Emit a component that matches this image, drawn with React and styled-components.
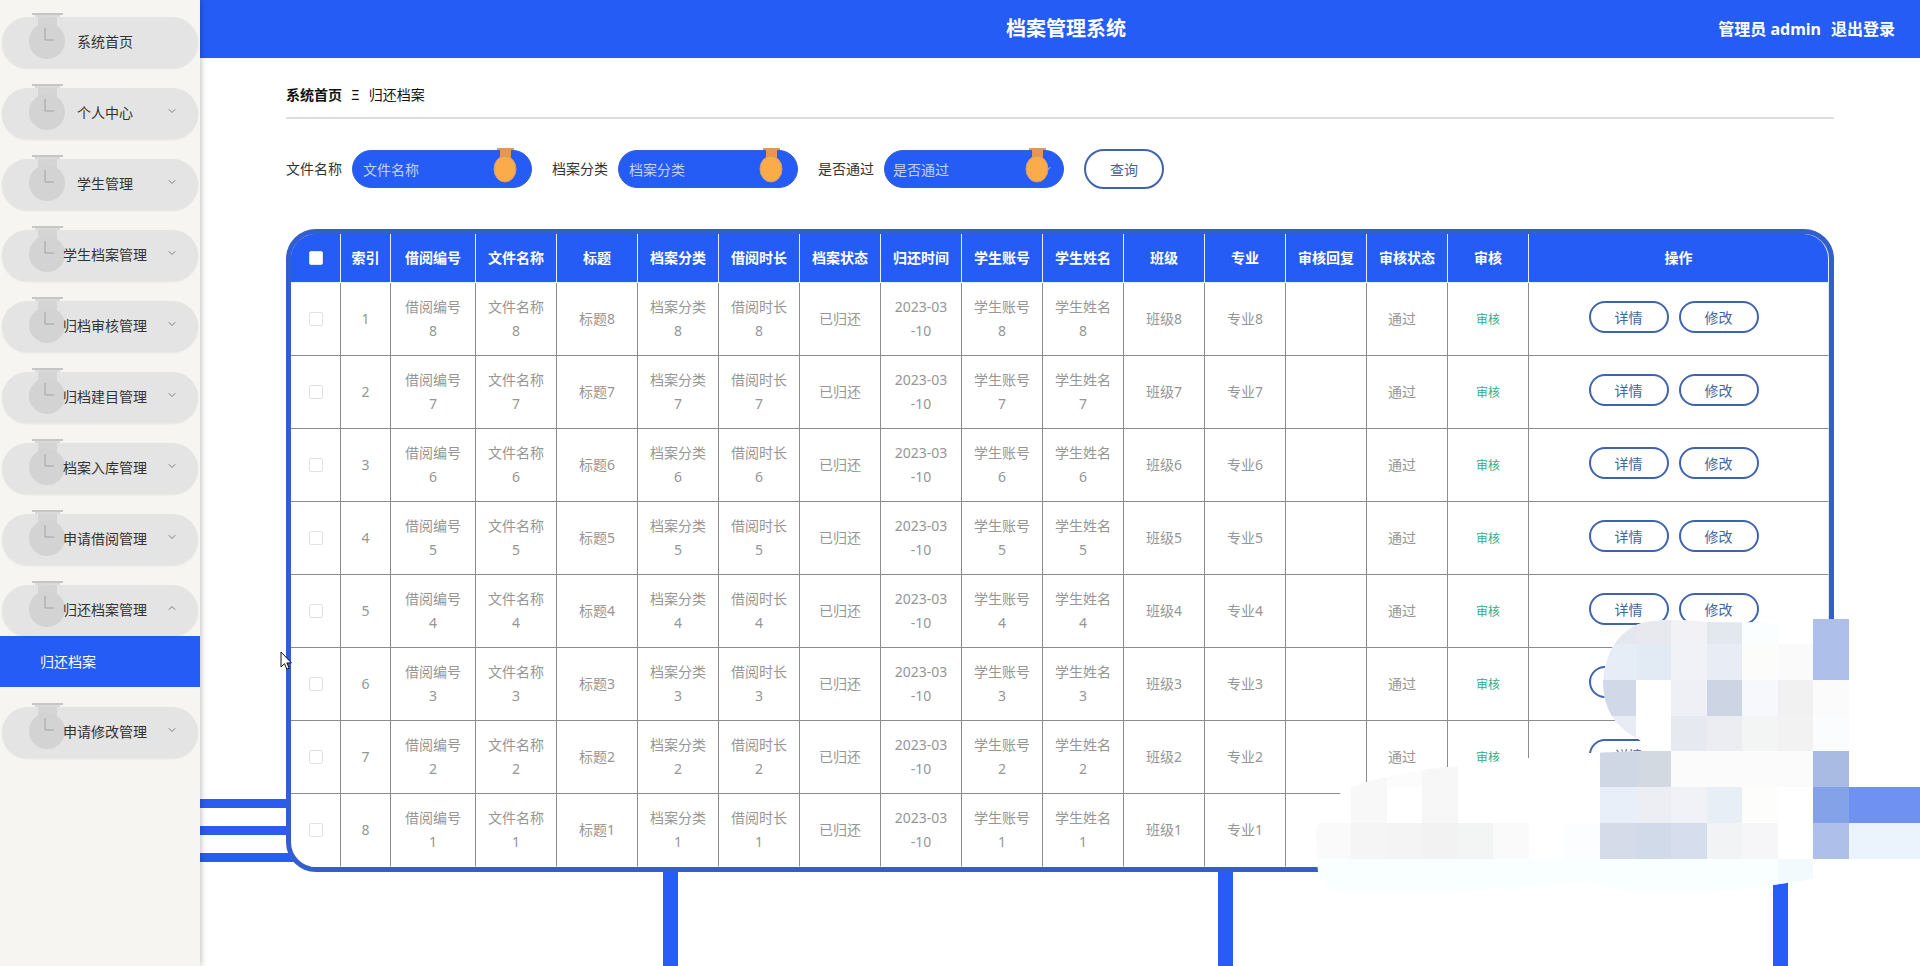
import React from "react";
import styled, { createGlobalStyle } from "styled-components";
import { ChevronDown, ChevronUp } from "lucide-react";

const GlobalStyle = createGlobalStyle`
  * {
    box-sizing: border-box;
  }
  body {
    margin: 0;
    background: #fff;
    font-family: "Noto Sans", "Noto Sans CJK SC", sans-serif;
    font-size: 14px;
    line-height: 24px;
  }
  button, input, select {
    font-family: inherit;
    font-size: 14px;
  }
`;

const Page = styled.div`
  position: relative;
  display: flex;
  min-height: 100vh;
`;
const Sidebar = styled.nav`
  position: relative;
  flex: 0 0 200px;
  padding-top: 17px;
  background: #f6f5f1;
  box-shadow: 1px 0 6px rgba(0, 0, 0, 0.25);
`;
const MenuItem = styled.button`
  position: relative;
  display: flex;
  align-items: center;
  justify-content: center;
  width: calc(100% - 4px);
  height: 51px;
  margin: 0 2px ${(p) => (p.$open ? 0 : 20)}px;
  padding: 0 0 4px 10px;
  border: 0;
  border-radius: 26px;
  background: #e4e4e4;
  box-shadow: 0 1px 2px rgba(0, 0, 0, 0.08);
  color: #333;
`;
const MenuText = styled.span`
  position: relative;
`;
const MenuMedal = styled.svg`
  position: absolute;
  left: 26px;
  top: -5px;
`;
const MenuArrow = styled.span`
  position: absolute;
  right: 20px;
  top: 17px;
  display: flex;
  color: #7c7f85;
`;
const SubMenu = styled.a`
  display: flex;
  align-items: center;
  height: 51px;
  margin-bottom: 20px;
  padding-left: 40px;
  background: #255cf6;
  color: #fff;
  text-decoration: none;
`;

const Main = styled.div`
  flex: 1;
  min-width: 0;
  background:
    repeating-linear-gradient(to bottom, #2a5cf0 0 9px, transparent 9px 27px) 0 calc(100% - 104px) / 110px 63px no-repeat,
    repeating-linear-gradient(to right, transparent 0 463px, #275cf6 463px 478px, transparent 478px 555px) 0 100% / 100% 110px no-repeat;
`;
const Header = styled.header`
  display: grid;
  grid-template-columns: 1fr auto 1fr;
  align-items: center;
  height: 58px;
  padding: 0 25px 0 37px;
  background: #255cf6;
  color: #fff;
`;
const Title = styled.h1`
  grid-column: 2;
  margin: 0;
  font-size: 20px;
  line-height: 28px;
`;
const User = styled.div`
  display: flex;
  justify-content: flex-end;
  gap: 10px;
  font-size: 16px;
  font-weight: bold;
`;
const Logout = styled.a`
  color: #fff;
  text-decoration: none;
`;

const Content = styled.main`
  padding: 0 5%;
`;
const Breadcrumb = styled.div`
  display: flex;
  align-items: center;
  gap: 9px;
  height: 61px;
  padding-top: 15px;
  border-bottom: 2px solid #ddd;
  color: #111;
`;
const SearchForm = styled.form`
  display: flex;
  align-items: center;
  gap: 20px;
  margin: 30px 0 40px;
`;
const Field = styled.div`
  display: flex;
  align-items: center;
  gap: 10px;
  color: #333;
`;
const FieldBox = styled.div`
  position: relative;
  display: flex;
`;
const FieldMedal = styled.svg`
  position: absolute;
  right: 15px;
  top: -2px;
  pointer-events: none;
`;
const FieldInput = styled.input`
  width: 180px;
  height: 38px;
  padding: 0 10px;
  border: 1px solid #3560d0;
  border-radius: 20px;
  background: #255cf6;
  color: #c3d2ef;
  outline: none;
  &::placeholder {
    color: #c3d2ef;
    opacity: 1;
  }
`;
const FieldSelect = styled.select`
  width: 180px;
  height: 38px;
  padding: 0 8px;
  border: 1px solid #3560d0;
  border-radius: 20px;
  background: #255cf6;
  color: #c3d2ef;
  appearance: none;
  outline: none;
`;
const SelectArrow = styled.span`
  position: absolute;
  right: 11px;
  top: 13px;
  display: flex;
  color: #c3d2ef;
  pointer-events: none;
`;
const PillButton = styled.button`
  width: 80px;
  height: ${(p) => (p.$small ? 32 : 40)}px;
  padding: 0;
  border: 2px solid #3f64ad;
  border-radius: 20px;
  background: #fff;
  color: #45659f;
`;

const TableBox = styled.div`
  overflow: hidden;
  border: 5px solid #325fcd;
  border-radius: 30px;
  background: #fff;
`;
const Table = styled.table`
  width: 100%;
  table-layout: fixed;
  border-collapse: separate;
  border-spacing: 0;
  text-align: center;
`;
const Th = styled.th`
  height: 49px;
  padding: 0;
  border-right: 1px solid #e6f1ff;
  border-bottom: 1px solid #e6f1ff;
  background: #255cf6;
  color: #fff;
  &:last-child {
    border-top-right-radius: 25px;
  }
`;
const HeadRow = styled.tr`
  background: #255cf6;
`;
const Td = styled.td`
  height: 73px;
  padding: 0 12px;
  border-right: 1px solid #8c8c90;
  border-bottom: 1px solid #8c8c90;
  color: #969696;
  word-break: break-all;
  &:last-child {
    border-right: 1px solid #dfe6f5;
  }
  tr:last-child > & {
    border-bottom-color: #fff;
  }
`;
const Check = styled.input`
  display: block;
  width: 14px;
  height: 14px;
  margin: 0 auto;
  appearance: none;
  border: 1px solid #e0e2e6;
  border-radius: 2px;
  background: #fff;
`;
const Status = styled.span`
  display: inline-block;
  margin-right: 10px;
`;
const AuditLink = styled.a`
  color: #2fae88;
  font-size: 12px;
  text-decoration: none;
`;
const Actions = styled.div`
  display: flex;
  justify-content: center;
  gap: 10px;
  padding: 0 10px 4px 0;
`;
const Overlay = styled.svg`
  position: absolute;
  right: 0;
  top: 619px;
  pointer-events: none;
`;
const Cursor = styled.svg`
  position: absolute;
  left: 280px;
  top: 651px;
  pointer-events: none;
`;

const menus = [
  "系统首页",
  "个人中心",
  "学生管理",
  "学生档案管理",
  "归档审核管理",
  "归档建目管理",
  "档案入库管理",
  "申请借阅管理",
  "归还档案管理",
  "申请修改管理",
];

const columns = [
  ["索引", 50],
  ["借阅编号", 85],
  ["文件名称", 81],
  ["标题", 81],
  ["档案分类", 81],
  ["借阅时长", 81],
  ["档案状态", 81],
  ["归还时间", 81],
  ["学生账号", 81],
  ["学生姓名", 81],
  ["班级", 81],
  ["专业", 81],
  ["审核回复", 81],
  ["审核状态", 81],
  ["审核", 81],
  ["操作", null],
];

const rows = [8, 7, 6, 5, 4, 3, 2, 1].map((n, i) => [
  i + 1,
  `借阅编号${n}`,
  `文件名称${n}`,
  `标题${n}`,
  `档案分类${n}`,
  `借阅时长${n}`,
  "已归还",
  "2023-03-10",
  `学生账号${n}`,
  `学生姓名${n}`,
  `班级${n}`,
  `专业${n}`,
  "",
]);

// x, y, width, height, color
const tiles = [
  [1600, 619, 36, 25, "#e2e7f0"],
  [1636, 619, 35, 25, "#e7e9ee"],
  [1671, 619, 36, 25, "#f2f2f6"],
  [1707, 619, 35, 25, "#e3e7ee"],
  [1742, 619, 36, 25, "#fbfeff"],
  [1600, 644, 36, 36, "#e6edf6"],
  [1636, 644, 35, 36, "#e2eaf3"],
  [1671, 644, 36, 36, "#f1f2f7"],
  [1707, 644, 35, 36, "#e8ecf4"],
  [1742, 644, 36, 36, "#fcfcfb"],
  [1778, 644, 35, 36, "#fafafa"],
  [1813, 619, 36, 61, "#aebfe9"],
  [1600, 680, 36, 36, "#d1d9e9"],
  [1671, 680, 36, 36, "#eff0f5"],
  [1707, 680, 35, 36, "#cdd4e3"],
  [1742, 680, 36, 36, "#f7f8fb"],
  [1778, 680, 35, 36, "#f1f1f1"],
  [1813, 680, 36, 36, "#fbfbfb"],
  [1600, 716, 36, 35, "#e9ecf5"],
  [1671, 716, 36, 35, "#e6e9ef"],
  [1707, 716, 35, 35, "#ebedf2"],
  [1742, 716, 36, 35, "#f3f4f4"],
  [1778, 716, 35, 35, "#f2f2f2"],
  [1813, 716, 36, 35, "#fafcfd"],
  [1600, 751, 36, 36, "#cfd6e4"],
  [1636, 751, 35, 36, "#d3d9e1"],
  [1671, 751, 142, 36, "#fbfbfc"],
  [1813, 751, 36, 36, "#a9bae3"],
  [1600, 787, 36, 36, "#e9eff8"],
  [1636, 787, 35, 36, "#eceef3"],
  [1671, 787, 36, 36, "#f1f2f7"],
  [1707, 787, 35, 36, "#e8eef5"],
  [1742, 787, 36, 36, "#fdfdfb"],
  [1813, 787, 36, 36, "#84a2e7"],
  [1849, 787, 71, 36, "#6f91f2"],
  [1600, 823, 36, 36, "#d6dbea"],
  [1636, 823, 35, 36, "#d0dae9"],
  [1671, 823, 36, 36, "#d6ddec"],
  [1707, 823, 35, 36, "#f2f3f5"],
  [1742, 823, 36, 36, "#f6f6f9"],
  [1813, 823, 36, 36, "#aebfe9"],
  [1849, 823, 71, 36, "#ebf4fd"],
  [1351, 751, 36, 72, "#f8f8f8"],
  [1387, 751, 35, 36, "#fcfcfc"],
  [1422, 751, 36, 72, "#f7f7f7"],
  [1316, 823, 35, 36, "#fafafa"],
  [1351, 823, 36, 36, "#f5f5f5"],
  [1387, 823, 35, 36, "#f4f4f4"],
  [1422, 823, 36, 36, "#f2f2f2"],
  [1458, 823, 35, 36, "#f3f5f5"],
  [1493, 823, 36, 36, "#fafafa"],
  [1564, 823, 36, 36, "#fbfdfe"],
  [1316, 859, 462, 36, "#f9feff"],
  [1778, 859, 35, 36, "#f3fafe"],
];

const blobPath =
  "M1318 872 L1316 830 Q1325 802 1341 793 Q1352 786 1367 782 Q1410 770 1458 766 L1529 758 L1590 753 L1641 751 Q1646 742 1636 738 Q1603 720 1603 682 Q1606 640 1636 625 Q1655 617 1707 622 L1813 623 V619 H1849 V787 H1920 V859 H1840 V874 H1813 V879 L1773 885 Q1690 896 1630 892 L1590 881 L1450 892 H1340 Q1326 886 1318 872 Z";

const Medal = ({ as: Svg, gray }) => (
  <Svg width={gray ? 40 : 24} height={gray ? 49 : 35} viewBox={gray ? "0 0 40 49" : "0 0 24 35"} aria-hidden="true">
    {gray ? (
      <>
        <path d="M10 3h19v12H10z" fill="#d5d5d5" />
        <path d="M4 1h31v2H4z" fill="#c6c6c6" />
        <path d="M7 3h25v2H7z" fill="#dadada" />
        <circle cx="19" cy="29" r="18" fill="#d3d3d3" />
        <path d="M17 16v12h9" fill="none" stroke="#a2a2a2" strokeWidth="1" />
      </>
    ) : (
      <>
        <path d="M7 2h11v10H7z" fill="#eb9650" />
        <path d="M4 0h17v2H4z" fill="#d99a62" />
        <ellipse cx="12" cy="21" rx="11" ry="13" fill="#fcab4b" stroke="#c49b78" strokeWidth="1" />
      </>
    )}
  </Svg>
);

const App = () => {
  return (
    <Page>
      <GlobalStyle />
      <Sidebar>
        {menus.map((name, i) => {
          const open = name === "归还档案管理";
          return (
            <React.Fragment key={name}>
              <MenuItem type="button" $open={open}>
                <Medal as={MenuMedal} gray />
                <MenuText>{name}</MenuText>
                {i > 0 && (
                  <MenuArrow>
                    {open ? <ChevronUp size={12} strokeWidth={2} /> : <ChevronDown size={12} strokeWidth={2} />}
                  </MenuArrow>
                )}
              </MenuItem>
              {open && <SubMenu href="#">归还档案</SubMenu>}
            </React.Fragment>
          );
        })}
      </Sidebar>
      <Main>
        <Header>
          <Title>档案管理系统</Title>
          <User>
            <span>管理员 admin</span>
            <Logout href="#">退出登录</Logout>
          </User>
        </Header>
        <Content>
          <Breadcrumb>
            <b>系统首页</b>
            <span>Ξ</span>
            <span>归还档案</span>
          </Breadcrumb>
          <SearchForm>
            <Field>
              <label htmlFor="fileName">文件名称</label>
              <FieldBox>
                <FieldInput id="fileName" placeholder="文件名称" />
                <Medal as={FieldMedal} />
              </FieldBox>
            </Field>
            <Field>
              <label htmlFor="category">档案分类</label>
              <FieldBox>
                <FieldInput id="category" placeholder="档案分类" />
                <Medal as={FieldMedal} />
              </FieldBox>
            </Field>
            <Field>
              <label htmlFor="passed">是否通过</label>
              <FieldBox>
                <FieldSelect id="passed">
                  <option>是否通过</option>
                </FieldSelect>
                <SelectArrow>
                  <ChevronDown size={12} />
                </SelectArrow>
                <Medal as={FieldMedal} />
              </FieldBox>
            </Field>
            <PillButton type="button">查询</PillButton>
          </SearchForm>
          <TableBox>
            <Table>
              <colgroup>
                <col width="50" />
                {columns.map(([name, width]) => (
                  <col key={name} width={width || undefined} />
                ))}
              </colgroup>
              <thead>
                <HeadRow>
                  <Th>
                    <Check type="checkbox" aria-label="全选" />
                  </Th>
                  {columns.map(([name]) => (
                    <Th key={name}>{name}</Th>
                  ))}
                </HeadRow>
              </thead>
              <tbody>
                {rows.map((row) => (
                  <tr key={row[0]}>
                    <Td>
                      <Check type="checkbox" aria-label={`选择${row[0]}`} />
                    </Td>
                    {row.map((cell, i) => (
                      <Td key={i}>{cell}</Td>
                    ))}
                    <Td>
                      <Status>通过</Status>
                    </Td>
                    <Td>
                      <AuditLink href="#">审核</AuditLink>
                    </Td>
                    <Td>
                      <Actions>
                        <PillButton type="button" $small>
                          详情
                        </PillButton>
                        <PillButton type="button" $small>
                          修改
                        </PillButton>
                      </Actions>
                    </Td>
                  </tr>
                ))}
              </tbody>
            </Table>
          </TableBox>
        </Content>
      </Main>
      <Overlay width="604" height="276" viewBox="1316 619 604 276" shapeRendering="crispEdges" aria-hidden="true">
        <clipPath id="blob">
          <path d={blobPath} />
        </clipPath>
        <g clipPath="url(#blob)">
          <path d="M1316 619h604v276h-604z" fill="#fff" />
          {tiles.map(([x, y, w, h, fill]) => (
            <rect key={`${x}-${y}`} x={x} y={y} width={w} height={h} fill={fill} />
          ))}
        </g>
      </Overlay>
      <Cursor width="13" height="20" viewBox="0 0 13 20" aria-hidden="true">
        <path d="M1 1v15l3.500-3.300 2.300 5.500 2.400-1-2.300-5.300H11.500z" fill="#fff" stroke="#111" strokeWidth="1" />
      </Cursor>
    </Page>
  );
};

export default App;
